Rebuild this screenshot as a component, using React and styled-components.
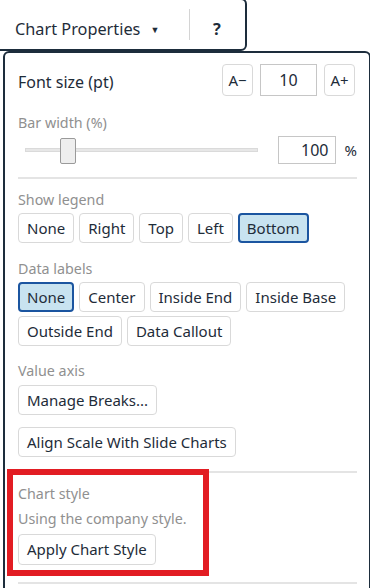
import React from 'react';
import styled, { createGlobalStyle } from 'styled-components';

const GlobalStyle = createGlobalStyle`
  html, body {
    margin: 0;
    padding: 0;
    overflow: hidden;
    background: #fff;
  }
  body {
    font-family: 'Segoe UI', 'Noto Sans', 'Open Sans', sans-serif;
    color: #1e2c39;
  }
`;

const Page = styled.div`
  position: relative;
  width: 370px;
  height: 588px;
  overflow: hidden;
`;

const Header = styled.div`
  display: flex;
  align-items: center;
  box-sizing: border-box;
  width: 255px;
  height: 53px;
  margin: -2px 0 0 -8px;
  padding: 8px 0 0 21px;
  border: 2px solid #1d2d3c;
  border-radius: 6px;
  background: #fff;
  font-size: 16.3px;
`;

const HeaderTitle = styled.span`
  display: flex;
  align-items: center;
  gap: 10px;
  width: 174px;
`;

const Caret = styled.span`
  font-size: 9px;
  margin-top: 1px;
`;

const HeaderDivider = styled.span`
  width: 1px;
  height: 31px;
  margin-top: -8px;
  background: #d4d4d4;
`;

const HelpMark = styled.span`
  font-weight: 700;
  margin-left: 23px;
`;

const Panel = styled.div`
  box-sizing: border-box;
  width: 368px;
  height: 560px;
  margin-left: 3px;
  padding: 11px 12px 0 13px;
  border: 2px solid #1d2d3c;
  border-radius: 6px;
  font-size: 15px;
`;

const Row = styled.div`
  display: flex;
  align-items: center;
  gap: ${p => p.gap || 5}px;
  margin-top: ${p => p.top || 0}px;
  flex-wrap: ${p => (p.wrap ? 'wrap' : 'nowrap')};
`;

const FieldTitle = styled.span`
  flex: 1;
  font-size: 16px;
  margin-top: 3px;
`;

const Label = styled.div`
  color: #909090;
  font-size: 14.3px;
  line-height: 20px;
  margin-top: ${p => p.top || 0}px;
`;

const Button = styled.button`
  box-sizing: border-box;
  height: ${p => p.h || 30}px;
  padding: 0 ${p => p.pad ?? (p.active ? 7 : 8)}px;
  margin-right: ${p => p.mr || 0}px;
  min-width: ${p => p.w || 0}px;
  font: inherit;
  font-size: 15px;
  line-height: 1;
  color: #1e2c39;
  background: ${p => (p.active ? '#c8e3f0' : '#fff')};
  border: ${p => (p.active ? '2px solid #1b55a0' : '1px solid #d9d9d9')};
  border-radius: 4px;
  cursor: pointer;
  white-space: nowrap;
`;

const NumberBox = styled.div`
  box-sizing: border-box;
  display: flex;
  align-items: center;
  justify-content: ${p => (p.right ? 'flex-end' : 'center')};
  width: ${p => p.w}px;
  height: ${p => p.h}px;
  padding-right: ${p => (p.right ? 6 : 0)}px;
  border: 1px solid #c6c6c6;
  font-size: 16px;
`;

const Slider = styled.div`
  position: relative;
  width: 247px;
  height: 28px;
  margin-right: 4px;
`;

const Track = styled.div`
  position: absolute;
  left: 7px;
  right: 7px;
  top: 12px;
  height: 4px;
  background: #e7e7e7;
  border: 1px solid #dadada;
  box-sizing: border-box;
`;

const Thumb = styled.div`
  position: absolute;
  left: 42px;
  top: 2px;
  width: 16px;
  height: 26px;
  box-sizing: border-box;
  background: #eeeeee;
  border: 1px solid #9a9a9a;
  border-radius: 2px;
`;

const Unit = styled.span`
  font-size: 15px;
`;

const Divider = styled.hr`
  border: none;
  height: 2px;
  background: #e4e4e4;
  margin: ${p => p.top || 0}px 0 0;
`;

const Highlight = styled.div`
  position: absolute;
  left: 7px;
  top: 469px;
  width: 202px;
  height: 107px;
  box-sizing: border-box;
  border: 6px solid #e21d23;
  pointer-events: none;
`;

export default function App() {
  return (
    <Page>
      <GlobalStyle />
      <Header>
        <HeaderTitle>
          Chart Properties <Caret>▼</Caret>
        </HeaderTitle>
        <HeaderDivider />
        <HelpMark>?</HelpMark>
      </Header>
      <Panel>
        <Row gap={7}>
          <FieldTitle>Font size (pt)</FieldTitle>
          <Button h={32} pad={0} w={31}>A−</Button>
          <NumberBox w={57} h={32}>10</NumberBox>
          <Button h={32} pad={0} w={31} mr={2}>A+</Button>
        </Row>
        <Label top={17}>Bar width (%)</Label>
        <Row gap={9} top={3}>
          <Slider>
            <Track />
            <Thumb />
          </Slider>
          <NumberBox w={58} h={28} right>100</NumberBox>
          <Unit>%</Unit>
        </Row>
        <Divider top={13} />
        <Label top={11}>Show legend</Label>
        <Row wrap top={3}>
          <Button>None</Button>
          <Button>Right</Button>
          <Button>Top</Button>
          <Button>Left</Button>
          <Button active>Bottom</Button>
        </Row>
        <Label top={16}>Data labels</Label>
        <Row wrap top={3}>
          <Button active>None</Button>
          <Button>Center</Button>
          <Button>Inside End</Button>
          <Button>Inside Base</Button>
        </Row>
        <Row wrap top={4}>
          <Button>Outside End</Button>
          <Button>Data Callout</Button>
        </Row>
        <Label top={15}>Value axis</Label>
        <Row top={4}>
          <Button>Manage Breaks...</Button>
        </Row>
        <Row top={12}>
          <Button>Align Scale With Slide Charts</Button>
        </Row>
        <Divider top={14} />
        <Label top={11}>Chart style</Label>
        <Label top={5}>Using the company style.</Label>
        <Row top={5}>
          <Button h={31}>Apply Chart Style</Button>
        </Row>
        <Divider top={17} />
      </Panel>
      <Highlight />
    </Page>
  );
}
